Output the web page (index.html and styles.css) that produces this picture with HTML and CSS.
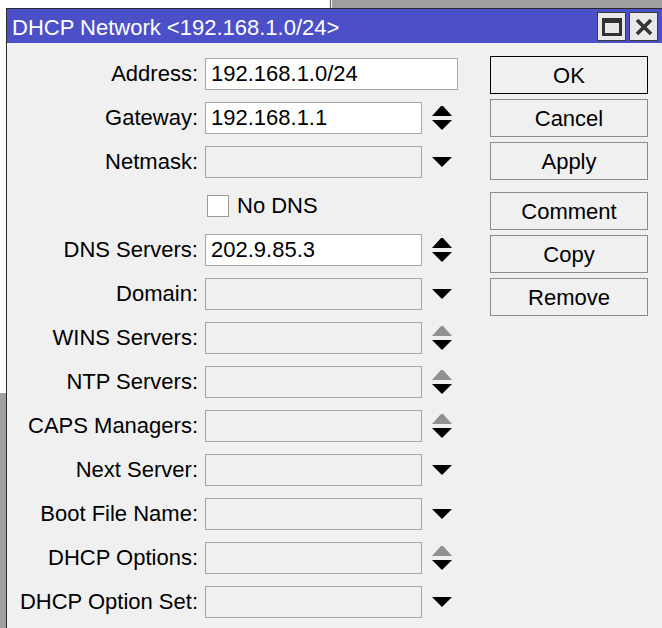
FILE: index.html
```html
<!DOCTYPE html>
<html>
<head>
<meta charset="utf-8">
<link rel="stylesheet" href="styles.css">
</head>
<body>
<div class="desktop">
  <div class="window">
    <div class="titlebar">
      <span class="title">DHCP Network &lt;192.168.1.0/24&gt;</span>
      <div class="tb-buttons">
        <div class="tb-btn"><svg width="20" height="20" viewBox="0 0 20 20"><rect x="1.5" y="2.5" width="17" height="15" fill="none" stroke="#333" stroke-width="3"/><rect x="1" y="1" width="18" height="5" fill="#333"/></svg></div>
        <div class="tb-btn"><svg width="18" height="18" viewBox="0 0 18 18"><path d="M2 2 L16 16 M16 2 L2 16" stroke="#333" stroke-width="3.6" stroke-linecap="butt"/></svg></div>
      </div>
    </div>
    <div class="content">
      <div class="form">
        <label class="lbl">Address:</label>
        <div class="input wide enabled">192.168.1.0/24</div>

        <label class="lbl">Gateway:</label>
        <div class="input enabled">192.168.1.1</div>
        <div class="arrow"><svg width="20" height="26" viewBox="0 0 20 26"><polygon points="9,1 11,1 20,11 0,11" fill="#000"/><polygon points="0,15 20,15 10,25" fill="#000"/></svg></div>

        <label class="lbl">Netmask:</label>
        <div class="input"></div>
        <div class="arrow"><svg width="20" height="10" viewBox="0 0 20 10"><polygon points="0,0 20,0 10,10" fill="#000"/></svg></div>

        <div class="lbl"></div>
        <div class="check"><span class="box"></span><span>No DNS</span></div>

        <label class="lbl">DNS Servers:</label>
        <div class="input enabled">202.9.85.3</div>
        <div class="arrow"><svg width="20" height="26" viewBox="0 0 20 26"><polygon points="9,1 11,1 20,11 0,11" fill="#000"/><polygon points="0,15 20,15 10,25" fill="#000"/></svg></div>

        <label class="lbl">Domain:</label>
        <div class="input"></div>
        <div class="arrow"><svg width="20" height="10" viewBox="0 0 20 10"><polygon points="0,0 20,0 10,10" fill="#000"/></svg></div>

        <label class="lbl">WINS Servers:</label>
        <div class="input"></div>
        <div class="arrow"><svg width="20" height="26" viewBox="0 0 20 26"><polygon points="9,1 11,1 20,11 0,11" fill="#8e918e"/><polygon points="0,15 20,15 10,25" fill="#000"/></svg></div>

        <label class="lbl">NTP Servers:</label>
        <div class="input"></div>
        <div class="arrow"><svg width="20" height="26" viewBox="0 0 20 26"><polygon points="9,1 11,1 20,11 0,11" fill="#8e918e"/><polygon points="0,15 20,15 10,25" fill="#000"/></svg></div>

        <label class="lbl">CAPS Managers:</label>
        <div class="input"></div>
        <div class="arrow"><svg width="20" height="26" viewBox="0 0 20 26"><polygon points="9,1 11,1 20,11 0,11" fill="#8e918e"/><polygon points="0,15 20,15 10,25" fill="#000"/></svg></div>

        <label class="lbl">Next Server:</label>
        <div class="input"></div>
        <div class="arrow"><svg width="20" height="10" viewBox="0 0 20 10"><polygon points="0,0 20,0 10,10" fill="#000"/></svg></div>

        <label class="lbl">Boot File Name:</label>
        <div class="input"></div>
        <div class="arrow"><svg width="20" height="10" viewBox="0 0 20 10"><polygon points="0,0 20,0 10,10" fill="#000"/></svg></div>

        <label class="lbl">DHCP Options:</label>
        <div class="input"></div>
        <div class="arrow"><svg width="20" height="26" viewBox="0 0 20 26"><polygon points="9,1 11,1 20,11 0,11" fill="#8e918e"/><polygon points="0,15 20,15 10,25" fill="#000"/></svg></div>

        <label class="lbl">DHCP Option Set:</label>
        <div class="input"></div>
        <div class="arrow"><svg width="20" height="10" viewBox="0 0 20 10"><polygon points="0,0 20,0 10,10" fill="#000"/></svg></div>
      </div>
      <div class="actions">
        <div class="group">
          <div class="btn default">OK</div>
          <div class="btn">Cancel</div>
          <div class="btn">Apply</div>
        </div>
        <div class="group">
          <div class="btn">Comment</div>
          <div class="btn">Copy</div>
          <div class="btn">Remove</div>
        </div>
      </div>
    </div>
  </div>
</div>
</body>
</html>
```

FILE: styles.css
```css
html, body {
  margin: 0;
  padding: 0;
}
body {
  width: 662px;
  height: 628px;
  overflow: hidden;
  font-family: "Liberation Sans", Arial, sans-serif;
  background:
    linear-gradient(to right, #9f9f9f, #9f9f9f) 0 393px / 6px 235px no-repeat,
    linear-gradient(to right, #e6e6e6 0 1px, #6a6a6a 1px 2px, #f4f4f4 2px 3px, #9f9f9f 3px) 329px 0 / 333px 8px no-repeat,
    #ffffff;
}
.desktop {
  padding: 8px 0 0 6px;
  height: 628px;
  box-sizing: border-box;
}
.window {
  border-left: 1px solid #2b2b2b;
  border-top: 1px solid #2b2b2b;
  background: #f0f0f0;
  height: 100%;
  box-sizing: border-box;
}
.titlebar {
  height: 34px;
  background: #4b50c8;
  display: flex;
  align-items: flex-start;
  justify-content: space-between;
  padding-left: 5px;
}
.title {
  color: #ffffff;
  font-size: 22px;
  line-height: 34px;
  padding-top: 2px;
}
.tb-buttons {
  display: flex;
  gap: 3px;
  padding-right: 4px;
  padding-top: 3px;
}
.tb-btn {
  width: 27px;
  height: 27px;
  border: 1px solid #3a3a3a;
  background: #e9e7ea;
  display: flex;
  align-items: center;
  justify-content: center;
}
.content {
  display: flex;
  gap: 32px;
}
.form {
  display: grid;
  grid-template-columns: 191px 217px 29px;
  grid-auto-rows: 32px;
  column-gap: 7px;
  row-gap: 12px;
  padding-top: 15px;
  align-items: center;
  font-size: 22px;
  color: #000;
}
.lbl {
  grid-column: 1;
  text-align: right;
  white-space: nowrap;
}
.input {
  grid-column: 2;
  height: 32px;
  box-sizing: border-box;
  border: 1px solid #a7a7a7;
  padding-left: 5px;
  line-height: 30px;
  white-space: nowrap;
  background: #f0f0f0;
}
.input.enabled {
  background: #ffffff;
}
.input.wide {
  grid-column: 2 / span 2;
}
.arrow {
  grid-column: 3;
  padding-left: 3px;
  display: flex;
  align-items: center;
}
.arrow svg {
  display: block;
}
.check {
  grid-column: 2 / span 2;
  display: flex;
  align-items: center;
  gap: 8px;
  padding-left: 2px;
}
.box {
  width: 22px;
  height: 22px;
  box-sizing: border-box;
  border: 1px solid #9a9a9a;
  background: #ffffff;
}
.actions {
  padding-top: 13px;
  display: flex;
  flex-direction: column;
  gap: 12px;
}
.group {
  display: flex;
  flex-direction: column;
  gap: 5px;
}
.btn {
  width: 158px;
  height: 38px;
  box-sizing: border-box;
  border: 1px solid #8c8c8c;
  background: #f0f0f0;
  font-size: 22px;
  line-height: 37px;
  text-align: center;
  color: #000;
}
.btn.default {
  border-color: #000;
}
```
